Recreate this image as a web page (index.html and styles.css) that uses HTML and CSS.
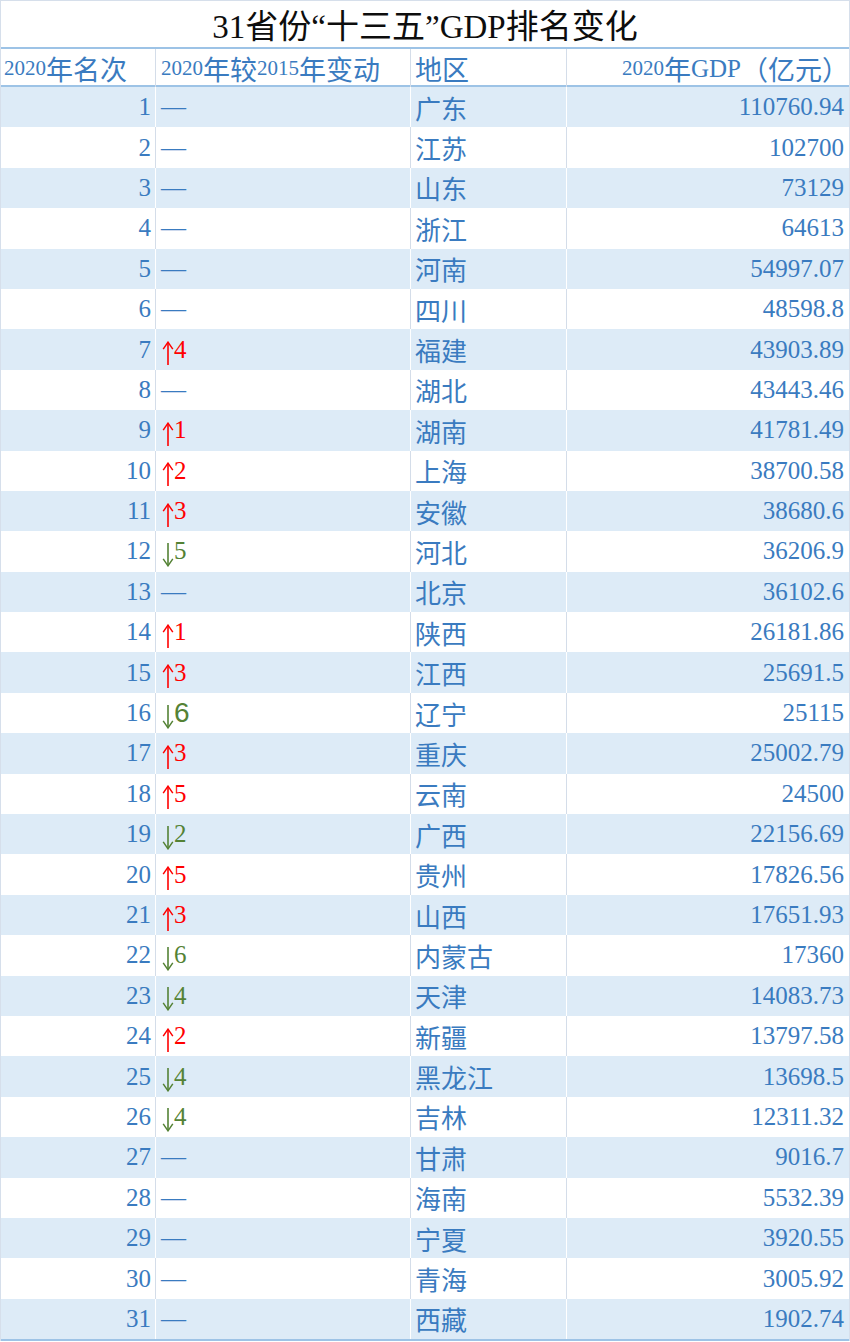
FILE: index.html
```html
<!DOCTYPE html>
<html lang="zh-CN">
<head>
<meta charset="utf-8">
<title>31省份“十三五”GDP排名变化</title>
<link rel="stylesheet" href="styles.css">
</head>
<body>
<svg width="0" height="0" class="defs" aria-hidden="true">
  <defs>
    <symbol id="arr-up" viewBox="0 0 12 24">
      <path d="M6 1.5 V24" fill="none" stroke="currentColor" stroke-width="1.6"/>
      <path d="M1.2 8.2 L6 1.2 L10.8 8.2" fill="none" stroke="currentColor" stroke-width="1.5" stroke-linejoin="miter"/>
    </symbol>
    <symbol id="arr-down" viewBox="0 0 12 24">
      <path d="M6 0 V22.5" fill="none" stroke="currentColor" stroke-width="1.6"/>
      <path d="M1.2 15.8 L6 22.8 L10.8 15.8" fill="none" stroke="currentColor" stroke-width="1.5" stroke-linejoin="miter"/>
    </symbol>
  </defs>
</svg>
<div class="sheet">
  <div class="title">31省份“十三五”GDP排名变化</div>
  <div class="row head">
    <div class="cell c1"><span class="n">2020</span>年名次</div>
    <div class="cell c2"><span class="n">2020</span>年较<span class="n">2015</span>年变动</div>
    <div class="cell c3">地区</div>
    <div class="cell c4"><span class="n">2020</span>年<span class="g">GDP</span>（亿元）</div>
  </div>
  <div class="body">
    <div class="row band"><div class="cell c1">1</div><div class="cell c2">—</div><div class="cell c3">广东</div><div class="cell c4">110760.94</div></div>
    <div class="row"><div class="cell c1">2</div><div class="cell c2">—</div><div class="cell c3">江苏</div><div class="cell c4">102700</div></div>
    <div class="row band"><div class="cell c1">3</div><div class="cell c2">—</div><div class="cell c3">山东</div><div class="cell c4">73129</div></div>
    <div class="row"><div class="cell c1">4</div><div class="cell c2">—</div><div class="cell c3">浙江</div><div class="cell c4">64613</div></div>
    <div class="row band"><div class="cell c1">5</div><div class="cell c2">—</div><div class="cell c3">河南</div><div class="cell c4">54997.07</div></div>
    <div class="row"><div class="cell c1">6</div><div class="cell c2">—</div><div class="cell c3">四川</div><div class="cell c4">48598.8</div></div>
    <div class="row band"><div class="cell c1">7</div><div class="cell c2 up"><svg class="arr"><use href="#arr-up"/></svg>4</div><div class="cell c3">福建</div><div class="cell c4">43903.89</div></div>
    <div class="row"><div class="cell c1">8</div><div class="cell c2">—</div><div class="cell c3">湖北</div><div class="cell c4">43443.46</div></div>
    <div class="row band"><div class="cell c1">9</div><div class="cell c2 up"><svg class="arr"><use href="#arr-up"/></svg>1</div><div class="cell c3">湖南</div><div class="cell c4">41781.49</div></div>
    <div class="row"><div class="cell c1">10</div><div class="cell c2 up"><svg class="arr"><use href="#arr-up"/></svg>2</div><div class="cell c3">上海</div><div class="cell c4">38700.58</div></div>
    <div class="row band"><div class="cell c1">11</div><div class="cell c2 up"><svg class="arr"><use href="#arr-up"/></svg>3</div><div class="cell c3">安徽</div><div class="cell c4">38680.6</div></div>
    <div class="row"><div class="cell c1">12</div><div class="cell c2 down"><svg class="arr"><use href="#arr-down"/></svg>5</div><div class="cell c3">河北</div><div class="cell c4">36206.9</div></div>
    <div class="row band"><div class="cell c1">13</div><div class="cell c2">—</div><div class="cell c3">北京</div><div class="cell c4">36102.6</div></div>
    <div class="row"><div class="cell c1">14</div><div class="cell c2 up"><svg class="arr"><use href="#arr-up"/></svg>1</div><div class="cell c3">陕西</div><div class="cell c4">26181.86</div></div>
    <div class="row band"><div class="cell c1">15</div><div class="cell c2 up"><svg class="arr"><use href="#arr-up"/></svg>3</div><div class="cell c3">江西</div><div class="cell c4">25691.5</div></div>
    <div class="row"><div class="cell c1">16</div><div class="cell c2 down"><svg class="arr"><use href="#arr-down"/></svg><span class="sans">6</span></div><div class="cell c3">辽宁</div><div class="cell c4">25115</div></div>
    <div class="row band"><div class="cell c1">17</div><div class="cell c2 up"><svg class="arr"><use href="#arr-up"/></svg>3</div><div class="cell c3">重庆</div><div class="cell c4">25002.79</div></div>
    <div class="row"><div class="cell c1">18</div><div class="cell c2 up"><svg class="arr"><use href="#arr-up"/></svg>5</div><div class="cell c3">云南</div><div class="cell c4">24500</div></div>
    <div class="row band"><div class="cell c1">19</div><div class="cell c2 down"><svg class="arr"><use href="#arr-down"/></svg>2</div><div class="cell c3">广西</div><div class="cell c4">22156.69</div></div>
    <div class="row"><div class="cell c1">20</div><div class="cell c2 up"><svg class="arr"><use href="#arr-up"/></svg>5</div><div class="cell c3">贵州</div><div class="cell c4">17826.56</div></div>
    <div class="row band"><div class="cell c1">21</div><div class="cell c2 up"><svg class="arr"><use href="#arr-up"/></svg>3</div><div class="cell c3">山西</div><div class="cell c4">17651.93</div></div>
    <div class="row"><div class="cell c1">22</div><div class="cell c2 down"><svg class="arr"><use href="#arr-down"/></svg>6</div><div class="cell c3">内蒙古</div><div class="cell c4">17360</div></div>
    <div class="row band"><div class="cell c1">23</div><div class="cell c2 down"><svg class="arr"><use href="#arr-down"/></svg>4</div><div class="cell c3">天津</div><div class="cell c4">14083.73</div></div>
    <div class="row"><div class="cell c1">24</div><div class="cell c2 up"><svg class="arr"><use href="#arr-up"/></svg>2</div><div class="cell c3">新疆</div><div class="cell c4">13797.58</div></div>
    <div class="row band"><div class="cell c1">25</div><div class="cell c2 down"><svg class="arr"><use href="#arr-down"/></svg>4</div><div class="cell c3">黑龙江</div><div class="cell c4">13698.5</div></div>
    <div class="row"><div class="cell c1">26</div><div class="cell c2 down"><svg class="arr"><use href="#arr-down"/></svg>4</div><div class="cell c3">吉林</div><div class="cell c4">12311.32</div></div>
    <div class="row band"><div class="cell c1">27</div><div class="cell c2">—</div><div class="cell c3">甘肃</div><div class="cell c4">9016.7</div></div>
    <div class="row"><div class="cell c1">28</div><div class="cell c2">—</div><div class="cell c3">海南</div><div class="cell c4">5532.39</div></div>
    <div class="row band"><div class="cell c1">29</div><div class="cell c2">—</div><div class="cell c3">宁夏</div><div class="cell c4">3920.55</div></div>
    <div class="row"><div class="cell c1">30</div><div class="cell c2">—</div><div class="cell c3">青海</div><div class="cell c4">3005.92</div></div>
    <div class="row band"><div class="cell c1">31</div><div class="cell c2">—</div><div class="cell c3">西藏</div><div class="cell c4">1902.74</div></div>
  </div>
</div>
</body>
</html>
```
FILE: styles.css
```css
html, body {
  margin: 0;
  padding: 0;
  background: #ffffff;
}
body {
  width: 850px;
  height: 1342px;
  overflow: hidden;
  font-family: "Liberation Serif", "Noto Sans CJK SC", serif;
}
.defs {
  position: absolute;
  width: 0;
  height: 0;
  overflow: hidden;
}
.sheet {
  width: 850px;
  box-sizing: border-box;
  border-left: 1px solid #d6dfeb;
  border-right: 1px solid #d6dfeb;
  border-top: 1px solid #d6dfeb;
}
.title {
  height: 46px;
  display: flex;
  align-items: center;
  justify-content: center;
  font-size: 33px;
  font-weight: 400;
  color: #0d0d0d;
}
.row {
  display: grid;
  grid-template-columns: 154px 255px 156px 1fr;
  color: #3a7bc0;
}
.head {
  height: 36px;
  border-top: 2px solid #9dc3e6;
  border-bottom: 2px solid #9dc3e6;
  font-size: 27px;
}
.head .n {
  font-size: 21px;
}
.head .g {
  font-size: 25px;
}
.body {
  height: 1252px;
  display: flex;
  flex-direction: column;
  border-bottom: 2px solid #9dc3e6;
}
.body .row {
  flex: 1 1 0;
  font-size: 25px;
}
.body .c3 {
  font-size: 26px;
}
.band {
  background: #ddebf7;
}
.cell {
  display: flex;
  align-items: center;
  white-space: nowrap;
  box-sizing: border-box;
  border-left: 1px solid #d4dde9;
  padding: 0 5px;
}
.band .cell {
  border-left-color: #ffffff;
}
.cell.c1 {
  border-left: none;
}
.body .c1 {
  justify-content: flex-end;
  padding-right: 4px;
}
.head .c1 {
  padding-left: 3px;
}
.c2 {
  padding-left: 5px;
}
.c3 {
  padding-left: 4px;
}
.c4 {
  justify-content: flex-end;
  padding-right: 5px;
}
.head .c4 {
  padding-right: 0;
}
.up {
  color: #ff0000;
}
.down {
  color: #548235;
}
.arr {
  width: 12px;
  height: 24px;
  flex: none;
  margin-top: 7px;
  margin-left: 1px;
}
.sans {
  font-family: "Liberation Sans", sans-serif;
  font-size: 28px;
}
```
